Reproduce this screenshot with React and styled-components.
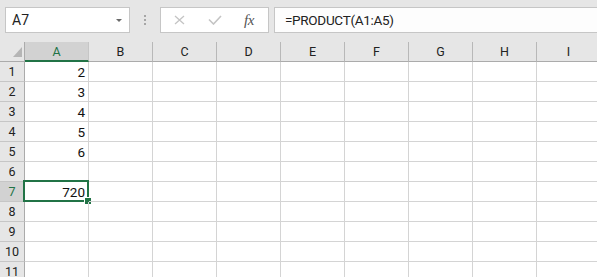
import React from "react";
import styled, { createGlobalStyle } from "styled-components";

const Global = createGlobalStyle`
  html, body { margin: 0; padding: 0; background: #e6e6e6; overflow: hidden; }
  * { box-sizing: border-box; }
`;

const Page = styled.div`
  width: 597px;
  height: 277px;
  overflow: hidden;
  background: #e6e6e6;
  font-family: Roboto, "Liberation Sans", sans-serif;
`;

const Toolbar = styled.div`
  display: flex;
  align-items: flex-start;
  height: 42px;
  padding: 7px 0 0 5px;
`;

const NameBox = styled.div`
  width: 125px;
  height: 26px;
  background: #fff;
  border: 1px solid #c6c6c6;
  display: flex;
  align-items: center;
  justify-content: space-between;
  padding: 0 7px 0 6px;
  font-size: 14px;
  color: #222;
`;

const Arrow = styled.span`
  width: 0;
  height: 0;
  border-left: 3px solid transparent;
  border-right: 3px solid transparent;
  border-top: 3px solid #6a6a6a;
  margin-top: 1px;
`;

const Grip = styled.div`
  width: 30px;
  height: 26px;
  display: flex;
  flex-direction: column;
  align-items: center;
  justify-content: center;
  gap: 2px;
`;

const Dot = styled.span`
  width: 2px;
  height: 2px;
  background: #a6a6a6;
`;

const FxBox = styled.div`
  width: 109px;
  height: 26px;
  background: #fff;
  border: 1px solid #c6c6c6;
  display: flex;
  align-items: center;
  padding-left: 13px;
  gap: 0;
`;

const FxSlot = styled.div`
  width: ${(p) => p.$w}px;
  display: flex;
  align-items: center;
  justify-content: flex-start;
`;

const FxLabel = styled.span`
  font-family: "Liberation Serif", serif;
  font-style: italic;
  font-size: 15px;
  color: #555;
  letter-spacing: -0.5px;
`;

const FormulaInput = styled.div`
  flex: 1;
  margin-left: 5px;
  height: 26px;
  background: #fdfdfd;
  border: 1px solid #c6c6c6;
  border-right: none;
  display: flex;
  align-items: center;
  padding-left: 10px;
  font-size: 13.5px;
  color: #222;
  letter-spacing: -0.3px;
`;

const Grid = styled.div`
  display: grid;
  grid-template-columns: 25px repeat(9, 64px);
  grid-auto-rows: 20px;
  background: #fff;
`;

const Corner = styled.div`
  background: #e6e6e6;
  border-right: 1px solid #ababab;
  border-bottom: 1px solid #ababab;
  display: flex;
  align-items: flex-end;
  justify-content: flex-end;
  padding: 0 2px 4px 0;
`;

const ColHead = styled.div`
  background: ${(p) => (p.$sel ? "#d2d2d2" : "#e6e6e6")};
  border-right: 1px solid ${(p) => (p.$sel ? "#c6c6c6" : "#b8b8b8")};
  border-bottom: ${(p) => (p.$sel ? "2px solid #217346" : "1px solid #ababab")};
  display: flex;
  align-items: center;
  justify-content: center;
  padding-top: ${(p) => (p.$sel ? 1 : 0)}px;
  font-size: 12.5px;
  color: ${(p) => (p.$sel ? "#217346" : "#222")};
`;

const RowHead = styled.div`
  background: ${(p) => (p.$sel ? "#d2d2d2" : "#e6e6e6")};
  border-right: 1px solid #ababab;
  border-bottom: 1px solid #c6c6c6;
  display: flex;
  align-items: center;
  justify-content: center;
  font-size: 12.5px;
  color: ${(p) => (p.$sel ? "#217346" : "#222")};
`;

const Cell = styled.div`
  position: relative;
  border-right: 1px solid #d4d4d4;
  border-bottom: 1px solid #d4d4d4;
  display: flex;
  align-items: center;
  justify-content: flex-end;
  padding: 1px 3px 0 0;
  font-size: 13.5px;
  color: #111;
`;

const SelFrame = styled.div`
  position: absolute;
  left: -2px;
  top: -2px;
  right: -1px;
  bottom: -1px;
  border: 2px solid #217346;
  pointer-events: none;
`;

const Handle = styled.div`
  position: absolute;
  right: -4px;
  bottom: -4px;
  width: 7px;
  height: 7px;
  background: #217346;
  border: 1px solid #fff;
  border-right: none;
  border-bottom: none;
`;

const cols = ["A", "B", "C", "D", "E", "F", "G", "H", "I"];
const values = { 1: "2", 2: "3", 3: "4", 4: "5", 5: "6", 7: "720" };

export default function App() {
  const rows = [];
  for (let r = 1; r <= 11; r++) {
    rows.push(
      <RowHead key={`h${r}`} $sel={r === 7}>
        {r}
      </RowHead>
    );
    cols.forEach((c, i) => {
      const sel = r === 7 && i === 0;
      rows.push(
        <Cell key={`${c}${r}`}>
          {i === 0 ? values[r] : null}
          {sel && (
            <SelFrame>
              <Handle />
            </SelFrame>
          )}
        </Cell>
      );
    });
  }

  return (
    <Page>
      <Global />
      <Toolbar>
        <NameBox>
          <span>A7</span>
          <Arrow />
        </NameBox>
        <Grip>
          <Dot />
          <Dot />
          <Dot />
        </Grip>
        <FxBox>
          <FxSlot $w={34}>
            <svg width="11" height="10" viewBox="0 0 11 10">
              <path d="M1 1 L10 9 M10 1 L1 9" stroke="#c4c4c4" strokeWidth="1.3" fill="none" />
            </svg>
          </FxSlot>
          <FxSlot $w={36}>
            <svg width="14" height="10" viewBox="0 0 14 10">
              <path d="M1 4.5 L5.5 9 L13 1" stroke="#c4c4c4" strokeWidth="1.6" fill="none" />
            </svg>
          </FxSlot>
          <FxSlot $w={20}>
            <FxLabel>fx</FxLabel>
          </FxSlot>
        </FxBox>
        <FormulaInput>=PRODUCT(A1:A5)</FormulaInput>
      </Toolbar>
      <Grid>
        <Corner>
          <svg width="9" height="10" viewBox="0 0 9 10">
            <path d="M9 0 L9 10 L0 10 Z" fill="#b5b5b5" />
          </svg>
        </Corner>
        {cols.map((c, i) => (
          <ColHead key={c} $sel={i === 0}>
            {c}
          </ColHead>
        ))}
        {rows}
      </Grid>
    </Page>
  );
}
